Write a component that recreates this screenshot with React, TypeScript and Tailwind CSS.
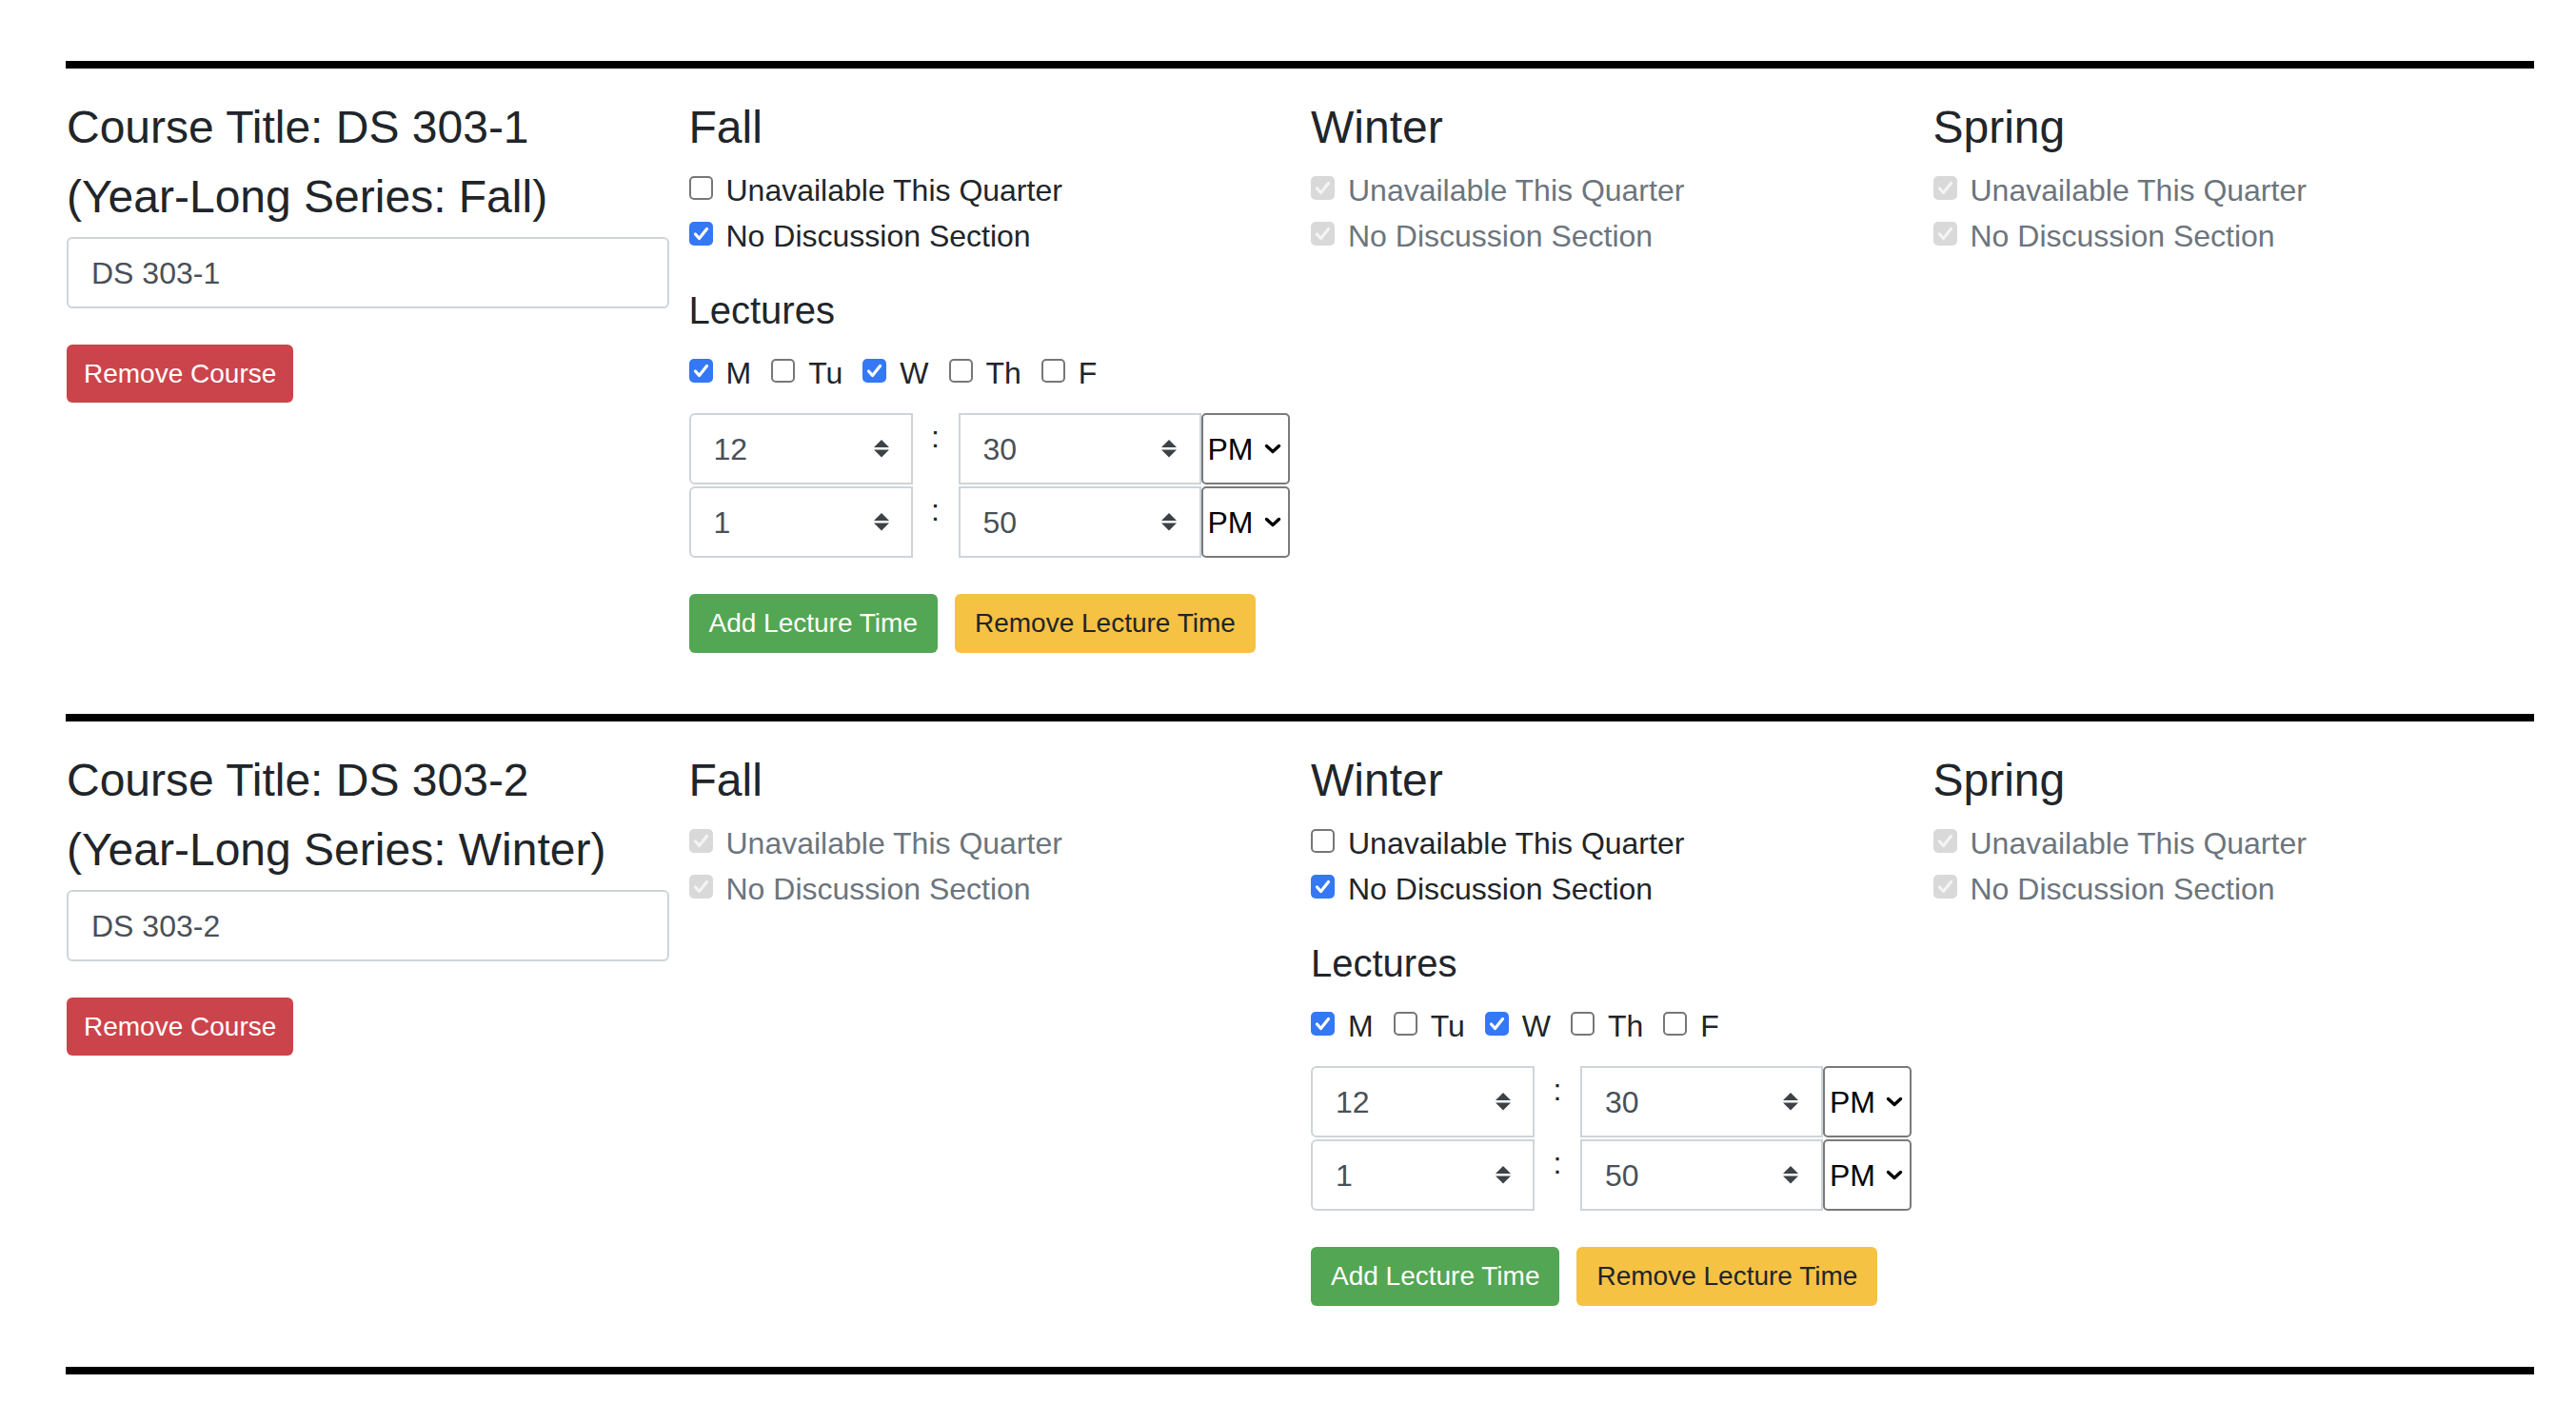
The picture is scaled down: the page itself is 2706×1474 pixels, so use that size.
import React from "react";

const quarters = ["Fall", "Winter", "Spring"];

const courses = [
  { title: "Course Title: DS 303-1", series: "(Year-Long Series: Fall)", code: "DS 303-1", active: 0 },
  { title: "Course Title: DS 303-2", series: "(Year-Long Series: Winter)", code: "DS 303-2", active: 1 },
];

const days = [
  { d: "M", on: true },
  { d: "Tu", on: false },
  { d: "W", on: true },
  { d: "Th", on: false },
  { d: "F", on: false },
];

const times = [
  { h: "12", m: "30", ap: "PM" },
  { h: "1", m: "50", ap: "PM" },
];

type CheckState = "on" | "off" | "disabled";

function Check({ state }: { state: CheckState }) {
  if (state === "off") {
    return <span className="mt-[9px] w-[25px] h-[25px] shrink-0 rounded-[5px] border-2 border-[#777777] bg-white" />;
  }
  return (
    <span
      className={`mt-[9px] w-[25px] h-[25px] shrink-0 rounded-[5px] flex items-center justify-center ${
        state === "on" ? "bg-[#3478f6]" : "bg-[#d9d9d9]"
      }`}
    >
      <svg width="25" height="25" viewBox="0 0 25 25" fill="none">
        <path
          d="M6.5 13 L10.5 17.5 L18.5 7.5"
          stroke={state === "on" ? "#ffffff" : "#f4f4f4"}
          strokeWidth="3.2"
          strokeLinecap="round"
          strokeLinejoin="round"
        />
      </svg>
    </span>
  );
}

function Option({ label, state, muted }: { label: string; state: CheckState; muted?: boolean }) {
  return (
    <div className={`flex items-start h-[48px] leading-[48px] text-[32px] ${muted ? "text-[#6c757d]" : "text-[#212529]"}`}>
      <Check state={state} />
      <span className="ml-[14px] whitespace-nowrap">{label}</span>
    </div>
  );
}

function Spinner() {
  return (
    <svg width="16" height="19" viewBox="0 0 16 19">
      <polygon points="8,0 16,8 0,8" fill="#3d4247" />
      <polygon points="0,10.5 16,10.5 8,18.5" fill="#3d4247" />
    </svg>
  );
}

function TimeRow({ h, m, ap }: { h: string; m: string; ap: string }) {
  return (
    <div className="flex h-[75px]">
      <div className="w-[235px] h-full border-2 border-[#ced4da] rounded-l-[6px] flex items-center justify-between pl-[24px] pr-[23px] text-[32px] text-[#495057]">
        <span>{h}</span>
        <Spinner />
      </div>
      <div className="w-[48px] text-center text-[32px] leading-[48px] pt-[1px] text-[#212529]">:</div>
      <div className="w-[255px] h-full border-2 border-[#ced4da] flex items-center justify-between pl-[24px] pr-[24px] text-[32px] text-[#495057]">
        <span>{m}</span>
        <Spinner />
      </div>
      <div className="w-[93px] h-full border-2 border-[#7a7a7a] rounded-[5px] flex items-center justify-between pl-[5px] pr-[7px] text-[32px] text-black">
        <span>{ap}</span>
        <svg width="18" height="11" viewBox="0 0 18 11" fill="none">
          <path d="M2.5 2.5 L9 8.5 L15.5 2.5" stroke="#000" strokeWidth="3.4" strokeLinecap="round" strokeLinejoin="round" />
        </svg>
      </div>
    </div>
  );
}

function Quarter({ name, active }: { name: string; active: boolean }) {
  return (
    <div className="flex flex-col">
      <h4 className="text-[48px] leading-[58px] text-[#212529] mb-[13px]">{name}</h4>
      {active ? (
        <>
          <Option label="Unavailable This Quarter" state="off" />
          <Option label="No Discussion Section" state="on" />
          <h5 className="mt-[30px] mb-[18px] text-[40px] leading-[48px] text-[#212529]">Lectures</h5>
          <div className="flex">
            {days.map(({ d, on }) => (
              <div key={d} className="flex items-start h-[48px] leading-[48px] text-[32px] text-[#212529] mr-[21px]">
                <Check state={on ? "on" : "off"} />
                <span className="ml-[14px]">{d}</span>
              </div>
            ))}
          </div>
          <div className="mt-[18px] flex flex-col gap-[2px]">
            {times.map((t, i) => (
              <TimeRow key={i} {...t} />
            ))}
          </div>
          <div className="mt-[38px] flex gap-[18px]">
            <button className="h-[62px] px-[21px] rounded-[6px] bg-[#53a653] text-white text-[28px]">Add Lecture Time</button>
            <button className="h-[62px] px-[21px] rounded-[6px] bg-[#f6c244] text-[#212529] text-[28px]">Remove Lecture Time</button>
          </div>
        </>
      ) : (
        <>
          <Option label="Unavailable This Quarter" state="disabled" muted />
          <Option label="No Discussion Section" state="disabled" muted />
        </>
      )}
    </div>
  );
}

function Rule() {
  return <div className="ml-[69px] w-[2593px] h-[8px] bg-black" />;
}

export default function App() {
  return (
    <div className="h-[1474px] overflow-hidden bg-white pt-[64px] font-['Liberation_Sans',Arial,sans-serif]">
      {courses.map((c) => (
        <section key={c.code}>
          <Rule />
          <div className="grid grid-cols-[633px_633px_633px_633px] gap-x-[20.5px] pl-[70px] pt-[33px] pb-[64px] items-start">
            <div className="flex flex-col items-start">
              <h4 className="text-[48px] leading-[58px] text-[#212529] mb-[15px] whitespace-nowrap">{c.title}</h4>
              <h4 className="text-[48px] leading-[58px] text-[#212529] mb-[13px] whitespace-nowrap">{c.series}</h4>
              <div className="w-full h-[75px] border-2 border-[#ced4da] rounded-[6px] flex items-center px-[24px] text-[32px] text-[#495057]">
                {c.code}
              </div>
              <button className="mt-[38px] h-[61px] px-[18px] rounded-[6px] bg-[#cc444b] text-white text-[28px]">Remove Course</button>
            </div>
            {quarters.map((q, i) => (
              <Quarter key={q} name={q} active={i === c.active} />
            ))}
          </div>
        </section>
      ))}
      <Rule />
    </div>
  );
}
